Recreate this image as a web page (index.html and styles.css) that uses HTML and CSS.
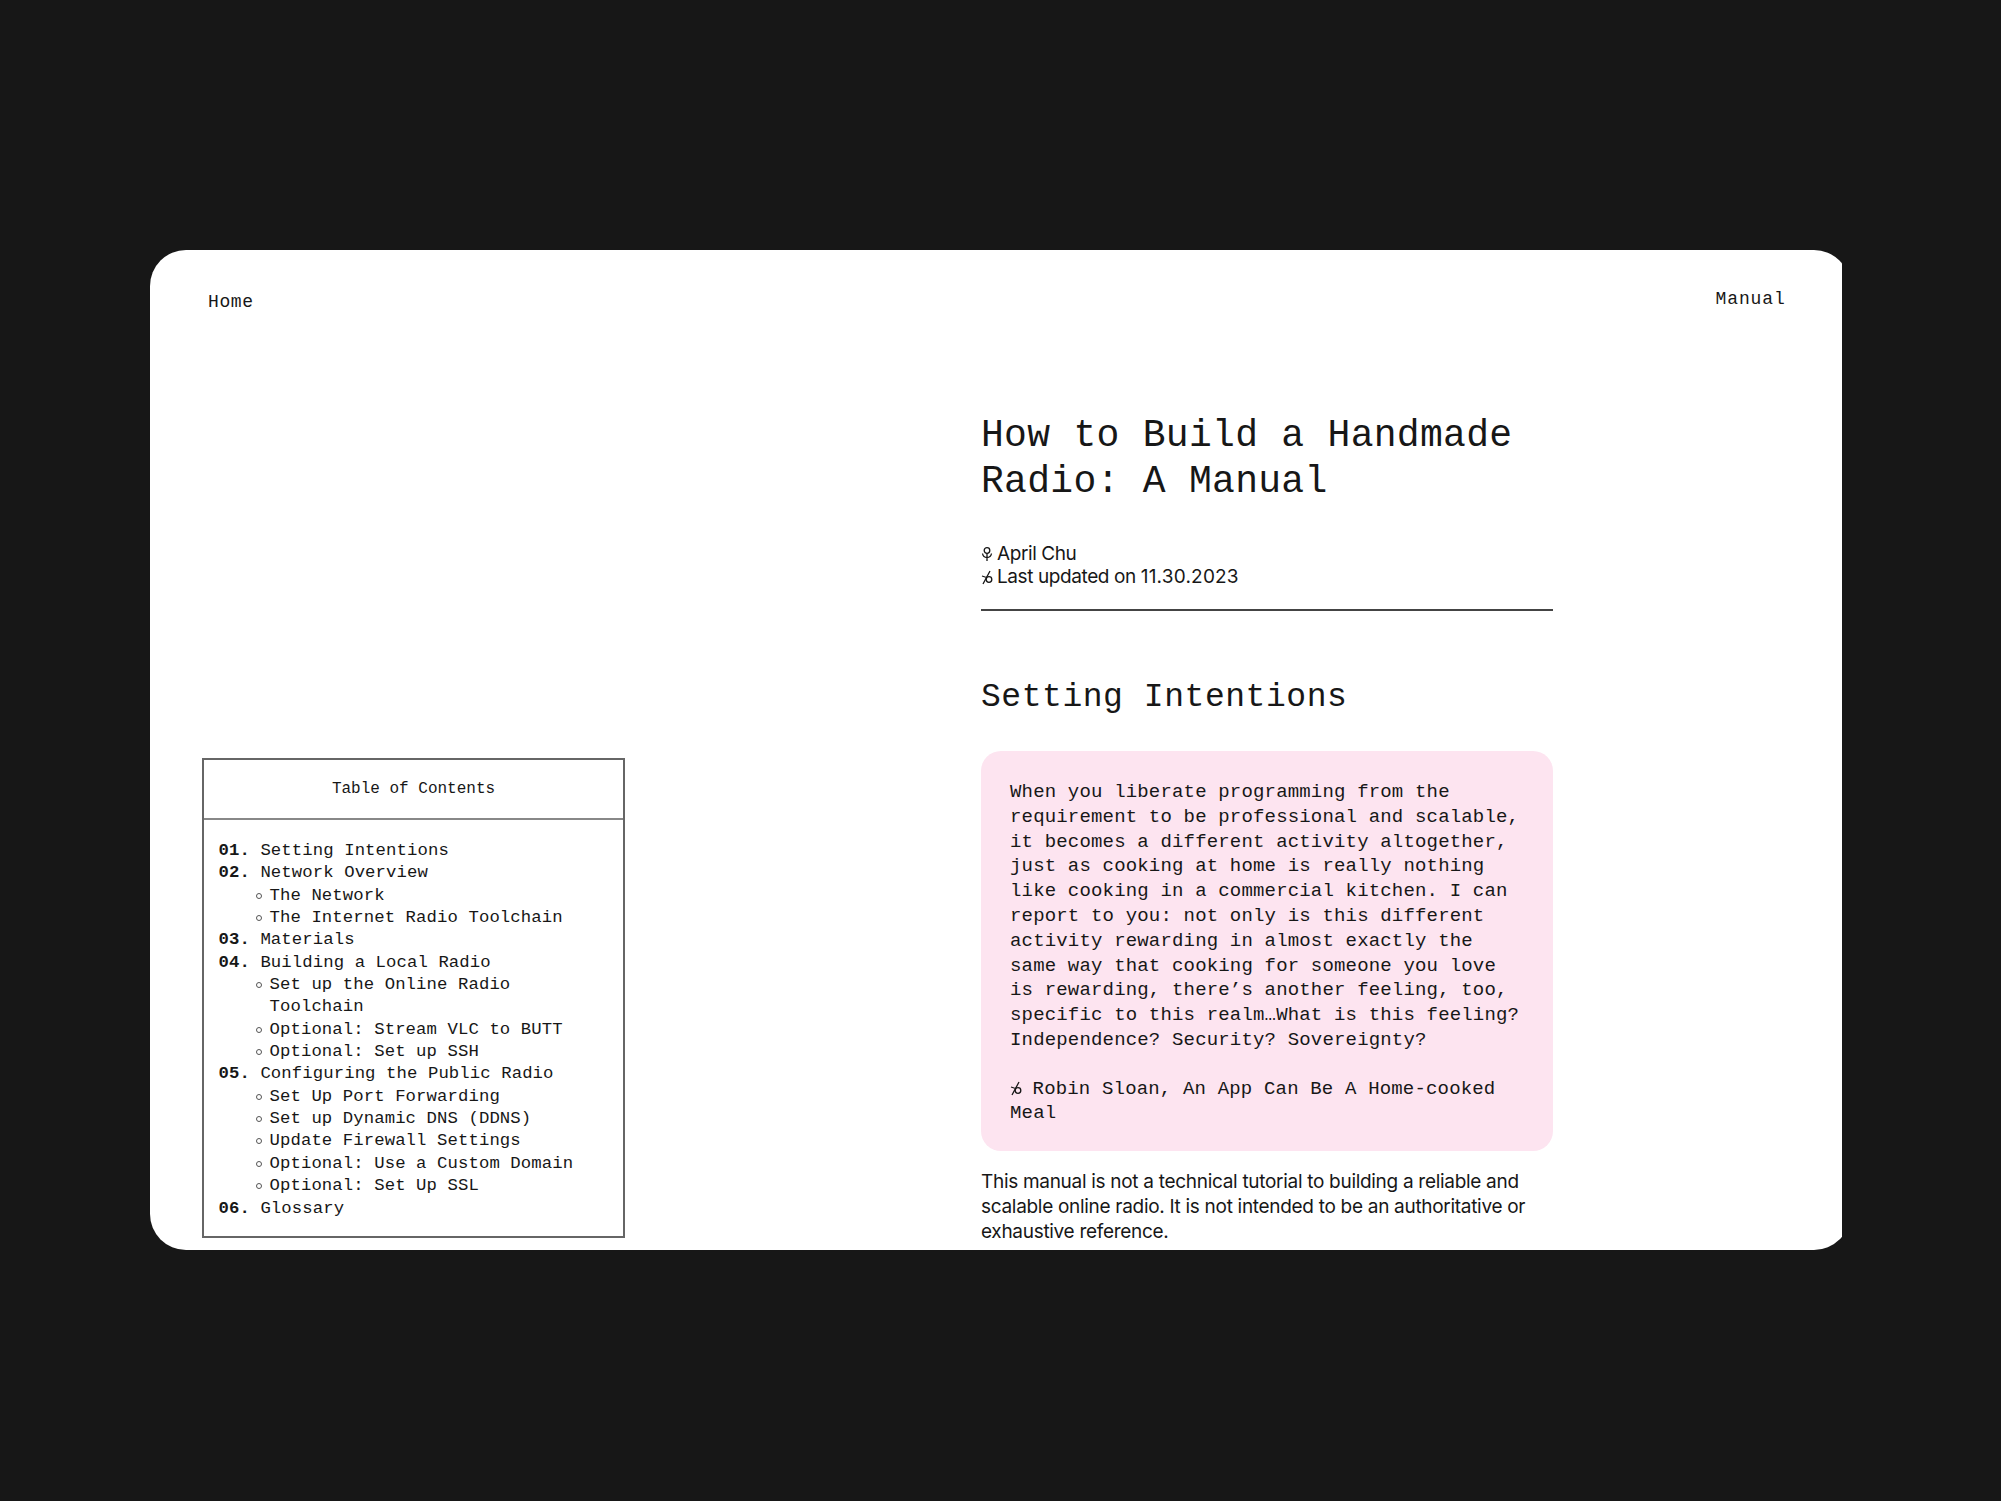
FILE: index.html
```html
<!DOCTYPE html>
<html lang="en">
<head>
  <meta charset="UTF-8">
  <link rel="stylesheet" href="styles.css">
  <title>How to Build a Handmade Radio: A Manual</title>
</head>
<body>
  <div class="frame">
    <div class="page">
      <aside class="side">
        <a class="nav-link home-link">Home</a>
        <div class="toc">
          <div class="toc-title">Table of Contents</div>
          <ol class="toc-list">
            <li><b>01.</b> Setting Intentions</li>
            <li><b>02.</b> Network Overview
              <ul>
                <li>The Network</li>
                <li>The Internet Radio Toolchain</li>
              </ul>
            </li>
            <li><b>03.</b> Materials</li>
            <li><b>04.</b> Building a Local Radio
              <ul>
                <li>Set up the Online Radio Toolchain</li>
                <li>Optional: Stream VLC to BUTT</li>
                <li>Optional: Set up SSH</li>
              </ul>
            </li>
            <li><b>05.</b> Configuring the Public Radio
              <ul>
                <li>Set Up Port Forwarding</li>
                <li>Set up Dynamic DNS (DDNS)</li>
                <li>Update Firewall Settings</li>
                <li>Optional: Use a Custom Domain</li>
                <li>Optional: Set Up SSL</li>
              </ul>
            </li>
            <li><b>06.</b> Glossary</li>
          </ol>
        </div>
      </aside>

      <main class="content">
        <h1>How to Build a Handmade Radio: A Manual</h1>
        <div class="meta">
          <div><svg class="glyph" viewBox="0 0 12 16"><circle cx="6" cy="4.500" r="2.800"/><path d="M6 7.300V15M1.500 7.500C2 10.500 4 11.500 6 11.500S10 10.500 10.500 7.500"/></svg> April Chu</div>
          <div><svg class="glyph" viewBox="0 0 12 16"><circle cx="8" cy="10.500" r="2.800"/><path d="M2 15 9 2M1 7 5.500 8.500"/></svg> Last updated on <span class="date">11.30.2023</span></div>
        </div>
        <hr class="rule">
        <h2>Setting Intentions</h2>
        <blockquote class="quote">
          <p>When you liberate programming from the requirement to be professional and scalable, it becomes a different activity altogether, just as cooking at home is really nothing like cooking in a commercial kitchen. I can report to you: not only is this different activity rewarding in almost exactly the same way that cooking for someone you love is rewarding, there’s another feeling, too, specific to this realm…What is this feeling? Independence? Security? Sovereignty?</p>
          <p class="quote-source"><svg class="glyph" viewBox="0 0 12 16"><circle cx="8" cy="10.500" r="2.800"/><path d="M2 15 9 2M1 7 5.500 8.500"/></svg> Robin Sloan, An App Can Be A Home-cooked Meal</p>
        </blockquote>
        <p class="body-text">This manual is not a technical tutorial to building a reliable and scalable online radio. It is not intended to be an authoritative or exhaustive reference.</p>
      </main>

      <a class="nav-link manual-link">Manual</a>
    </div>
  </div>
</body>
</html>
```

FILE: styles.css
```css
html, body {
  margin: 0;
  height: 100%;
}

body {
  background-color: #171717;
  padding: 250px 0 0 150px;
  box-sizing: border-box;
  font-family: 'Liberation Mono', monospace;
  color: #171717;
}

.frame {
  width: 1692px;
  height: 1000px;
  overflow: hidden;
}

/* the right corners run past the frame and get cut off */
.page {
  width: 1700px;
  height: 1000px;
  box-sizing: border-box;
  background-color: #fff;
  border-radius: 36px;
  display: flex;
  overflow: hidden;
}

.nav-link {
  font-size: 18px;
  letter-spacing: 0.6px;
  line-height: 22px;
}

.side {
  width: 831px;
  flex-shrink: 0;
  padding: 40px 0 0 52px;
  box-sizing: border-box;
  display: flex;
  flex-direction: column;
}

.home-link {
  margin-left: 6px;
  margin-top: 1px;
}

.toc {
  margin-top: 445px;
  width: 423px;
  height: 480px;
  box-sizing: border-box;
  border: 2px solid #666;
}

.toc-title {
  font-size: 16px;
  letter-spacing: 0;
  height: 60px;
  line-height: 59px;
  text-align: center;
  border-bottom: 2px solid #888;
  box-sizing: border-box;
}

.toc-list {
  list-style: none;
  margin: 0;
  padding: 20px 0 0 14.500px;
  font-size: 17.300px;
  line-height: 22.350px;
  letter-spacing: 0.100px;
}

.toc-list b {
  font-weight: 700;
}

.toc-list ul {
  list-style: none;
  margin: 0;
  padding: 0 0 0 51px;
  width: 320px;
}

.toc-list ul li {
  position: relative;
}

.toc-list ul li::before {
  content: "";
  position: absolute;
  left: -14px;
  top: 8px;
  width: 4px;
  height: 4px;
  border: 1px solid #555;
  border-radius: 50%;
}

.content {
  width: 572px;
  flex-shrink: 0;
  padding-top: 163px;
}

h1 {
  margin: 0;
  font-size: 38px;
  font-weight: 400;
  line-height: 46px;
  letter-spacing: 0.300px;
}

.meta {
  margin-top: 36.500px;
  font-family: Inter, 'Liberation Sans', sans-serif;
  font-size: 19px;
  line-height: 23px;
  letter-spacing: -0.4px;
}

.date {
  letter-spacing: 0.200px;
}

.glyph {
  width: 12px;
  height: 16px;
  margin-right: -1px;
  fill: none;
  stroke: #171717;
  stroke-width: 1.300;
  vertical-align: -2px;
}

.rule {
  margin: 21px 0 0;
  border: 0;
  border-top: 2px solid #444;
}

h2 {
  margin: 67px 0 0;
  font-size: 33px;
  font-weight: 400;
  line-height: 40px;
  letter-spacing: 0.550px;
}

.quote {
  margin: 33px 0 0;
  padding: 29.500px 28px 26.500px 29px;
  background-color: #fde4f0;
  border-radius: 20px;
  font-size: 19px;
  line-height: 24.800px;
  letter-spacing: 0.170px;
}

.quote p {
  margin: 0;
}

.quote .quote-source {
  margin-top: 24px;
  line-height: 24px;
}

.body-text {
  margin: 19px 0 0;
  font-family: Inter, 'Liberation Sans', sans-serif;
  font-size: 19px;
  line-height: 24.800px;
  letter-spacing: -0.300px;
}

.manual-link {
  margin-left: 162.500px;
  margin-top: 38px;
  height: 22px;
  letter-spacing: 0.900px;
}
```
